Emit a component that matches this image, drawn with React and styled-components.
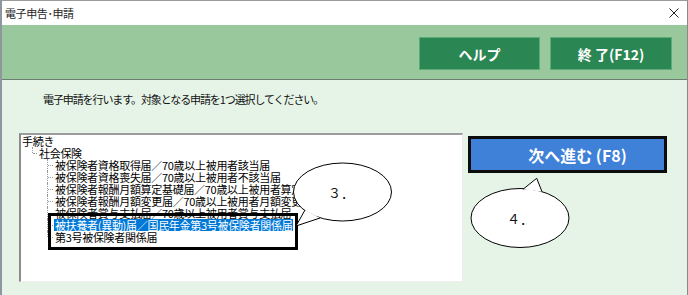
import React from 'react';
import styled, { createGlobalStyle } from 'styled-components';

const Global = createGlobalStyle`
  html, body { margin: 0; padding: 0; background: #ffffff; }
  body { font-family: "Noto Sans CJK JP", "Noto Sans", sans-serif; }
  #root { width: 688px; height: 295px; }
  *, *::before, *::after { box-sizing: border-box; }
`;

const Page = styled.div`
  position: relative;
  width: 688px;
  height: 295px;
  overflow: hidden;
`;

const Window = styled.div`
  width: 688px;
  height: 295px;
  border-top: 1px solid #9a9a9a;
  border-left: 2px solid #8e96a0;
  border-right: 1px solid #8a8a8a;
  display: flex;
  flex-direction: column;
  background: #ffffff;
`;

const TitleBar = styled.div`
  height: 24px;
  flex-shrink: 0;
  display: flex;
  align-items: center;
  justify-content: space-between;
  padding: 0 8px 0 3px;
  background: #ffffff;
`;

const Title = styled.span`
  font-size: 11px;
  line-height: 14px;
  color: #1e1e1e;
  letter-spacing: -0.4px;
`;

const CloseIcon = styled.svg`
  width: 10px;
  height: 10px;
  display: block;
`;

const Header = styled.div`
  height: 55px;
  flex-shrink: 0;
  background: #98c89b;
  border-bottom: 1px solid #6f7c72;
  display: flex;
  justify-content: flex-end;
  align-items: flex-start;
  gap: 10px;
  padding: 12px 15px 0 0;
`;

const GreenButton = styled.button`
  width: ${(p) => p.$w}px;
  height: 33px;
  background: #2a8653;
  border: 1px solid #5cab79;
  color: #ffffff;
  font-family: "Noto Sans CJK JP", sans-serif;
  font-weight: 700;
  font-size: 14px;
  padding: 0;
  display: flex;
  align-items: center;
  justify-content: center;
  white-space: pre;
`;

const Body = styled.div`
  flex: 1;
  background: #e6f4e7;
  display: flex;
  flex-direction: column;
`;

const Instruction = styled.p`
  margin: 12px 0 0 41px;
  font-size: 11px;
  line-height: 14px;
  color: #111;
  letter-spacing: -1.1px;
`;

const ContentRow = styled.div`
  margin-top: 27px;
  padding-left: 17px;
  display: flex;
  align-items: flex-start;
  gap: 5px;
`;

const TreeBox = styled.div`
  position: relative;
  width: 444px;
  height: 149px;
  background: #ffffff;
  border-style: solid;
  border-width: 2px 1px 1px 2px;
  border-color: #9c9c9c #eeeeee #eeeeee #8c8c8c;
`;

const Node = styled.div`
  height: 12px;
  display: flex;
  align-items: center;
  margin-left: ${(p) => p.$indent}px;
`;

const Connector = styled.span`
  position: relative;
  align-self: stretch;
  width: ${(p) => p.$w}px;
  flex-shrink: 0;
  &::before {
    content: '';
    position: absolute;
    left: 0;
    top: 0;
    height: ${(p) => (p.$last ? '6px' : '12px')};
    border-left: 1px dotted #9a9a9a;
  }
  &::after {
    content: '';
    position: absolute;
    left: 1px;
    top: 6px;
    width: ${(p) => p.$w - 2}px;
    border-top: 1px dotted #9a9a9a;
  }
`;

const Label = styled.span`
  font-size: 11px;
  line-height: 12px;
  white-space: nowrap;
  padding: 0 1px;
  letter-spacing: -0.3px;
  color: ${(p) => (p.$selected ? '#ffffff' : '#000000')};
  background: ${(p) => (p.$selected ? '#0078d7' : 'transparent')};
`;

const Marker = styled.div`
  position: absolute;
  left: 27px;
  top: 78px;
  width: 250px;
  height: 37px;
  border: 3px solid #000000;
`;

const NextButton = styled.button`
  margin-top: 3px;
  width: 199px;
  height: 37px;
  background: #3f81d8;
  border: 3px solid #0d0d0d;
  color: #ffffff;
  font-family: "Noto Sans CJK JP", sans-serif;
  font-weight: 700;
  font-size: 16px;
  padding: 0 0 0 20px;
  display: flex;
  align-items: center;
  justify-content: center;
`;

const Overlay = styled.svg`
  position: absolute;
  left: 0;
  top: 0;
  width: 688px;
  height: 295px;
  pointer-events: none;
`;

const items = [
  '被保険者資格取得届／70歳以上被用者該当届',
  '被保険者資格喪失届／70歳以上被用者不該当届',
  '被保険者報酬月額算定基礎届／70歳以上被用者算定基礎届',
  '被保険者報酬月額変更届／70歳以上被用者月額変更届',
  '被保険者賞与支払届／70歳以上被用者賞与支払届',
  '被扶養者(異動)届／国民年金第3号被保険者関係届',
  '第3号被保険者関係届',
];

function Callout({ cx, cy, rx, ry, tail, label, tx, ty }) {
  const [a, tip, b] = tail;
  return (
    <g>
      <ellipse cx={cx} cy={cy} rx={rx} ry={ry} fill="#ffffff" stroke="#000" strokeWidth="1" />
      <polygon points={`${a[0]},${a[1]} ${tip[0]},${tip[1]} ${b[0]},${b[1]}`} fill="#ffffff" />
      <polyline
        points={`${a[0]},${a[1]} ${tip[0]},${tip[1]} ${b[0]},${b[1]}`}
        fill="none"
        stroke="#000"
        strokeWidth="1"
      />
      <text
        x={tx}
        y={ty}
        fontSize="13"
        fontFamily='"Noto Sans CJK JP", sans-serif'
        fill="#111"
      >
        {label}
      </text>
    </g>
  );
}

export default function App() {
  return (
    <>
      <Global />
      <Page>
        <Window>
          <TitleBar>
            <Title>電子申告･申請</Title>
            <CloseIcon viewBox="0 0 10 10">
              <path d="M0.5 0.5 L9.5 9.5 M9.5 0.5 L0.5 9.5" stroke="#222" strokeWidth="1" />
            </CloseIcon>
          </TitleBar>
          <Header>
            <GreenButton $w={121}>ヘルプ</GreenButton>
            <GreenButton $w={122}>{'終 了(F12)'}</GreenButton>
          </Header>
          <Body>
            <Instruction>電子申請を行います。対象となる申請を1つ選択してください。</Instruction>
            <ContentRow>
              <TreeBox>
                <Node $indent={0}>
                  <Label>手続き</Label>
                </Node>
                <Node $indent={11}>
                  <Connector $w={6} $last />
                  <Label>社会保険</Label>
                </Node>
                {items.map((t, i) => (
                  <Node key={t} $indent={26}>
                    <Connector $w={7} $last={i === items.length - 1} />
                    <Label $selected={i === 5}>{t}</Label>
                  </Node>
                ))}
                <Marker />
              </TreeBox>
              <NextButton>次へ進む (F8)</NextButton>
            </ContentRow>
          </Body>
        </Window>
        <Overlay viewBox="0 0 688 295">
          <Callout
            cx={342.5}
            cy={192}
            rx={49}
            ry={29}
            tail={[[305, 210], [296, 226], [320, 218]]}
            label="３．"
            tx={328}
            ty={198}
          />
          <Callout
            cx={520}
            cy={218}
            rx={49}
            ry={29.5}
            tail={[[523, 189.3], [536.7, 178.3], [542, 191.7]]}
            label="４．"
            tx={507}
            ty={224}
          />
        </Overlay>
      </Page>
    </>
  );
}
